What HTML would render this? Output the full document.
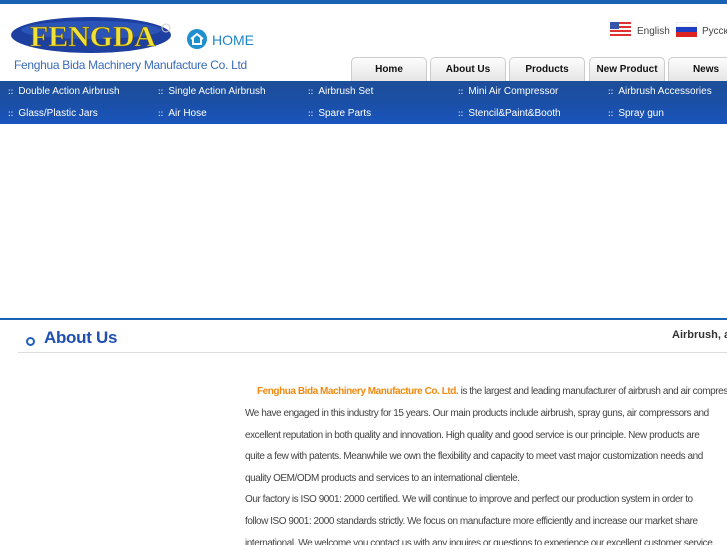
<!DOCTYPE html>
<html><head><meta charset="utf-8"><style>
*{margin:0;padding:0;box-sizing:border-box}
html,body{width:727px;height:545px;overflow:hidden}
body{background:#fff;font-family:"Liberation Sans",sans-serif}
#w{position:relative;width:727px;height:545px;overflow:hidden}
.a{position:absolute;white-space:nowrap}
.topbar{left:0;top:0;width:727px;height:4px;background:#1a62b4}
.tab{position:absolute;top:57px;height:25px;border:1px solid #ccc;border-bottom:none;border-radius:5px 5px 0 0;background:linear-gradient(#fdfdfd,#e4e4e4);font-size:10px;font-weight:bold;text-align:center;line-height:24px;color:#111}
.nav{left:0;top:81px;width:727px;height:43px;background:linear-gradient(#1d4e98,#1a4fa6 50%,#1a55bd)}
.nav div{position:absolute;color:#fff;font-size:10px}
.nav div:before{content:"::";font-size:8px;font-weight:bold;margin-right:5px;color:#dde}
.p{left:245px;font-size:10px;color:#444;letter-spacing:-0.45px}
</style></head><body><div id="w">
<div class="a topbar"></div>
<svg class="a" style="left:10px;top:15px" width="166" height="40"><ellipse cx="81" cy="20" rx="80" ry="18" fill="#1d3fa0"/><ellipse cx="81" cy="15" rx="70" ry="9" fill="#3a6ad0" opacity=".5"/><text x="20" y="31" font-family="Liberation Serif" font-weight="bold" font-size="28" fill="#f1e23a" stroke="#6a5a10" stroke-width=".6" textLength="126" lengthAdjust="spacingAndGlyphs">FENGDA</text><circle cx="156" cy="13" r="4" fill="none" stroke="#ccc"/></svg>
<svg class="a" style="left:186px;top:28px" width="22" height="22"><circle cx="11" cy="11" r="10" fill="#1f8fce"/><path d="M5 11 L11 6 L17 11 M7 10 V16 H15 V10" fill="none" stroke="#fff" stroke-width="2"/></svg>
<div class="a" style="left:212px;top:32px;font-size:14px;color:#1f88c8">HOME</div>
<div class="a" style="left:14px;top:58px;font-size:12px;color:#3a6cb8;letter-spacing:-0.3px">Fenghua Bida Machinery Manufacture Co. Ltd</div>
<svg class="a" style="left:610px;top:22px" width="21" height="15"><rect width="21" height="15" fill="#fff"/><g fill="#d33"><rect y="0" width="21" height="2"/><rect y="4" width="21" height="2"/><rect y="8" width="21" height="2"/><rect y="12" width="21" height="2"/></g><rect width="9" height="7" fill="#3355aa"/></svg>
<div class="a" style="left:637px;top:26px;font-size:10px;color:#444">English</div>
<svg class="a" style="left:676px;top:22px" width="21" height="15"><rect width="21" height="5" fill="#fff" stroke="#ccc" stroke-width=".5"/><rect y="5" width="21" height="5" fill="#1f3fc0"/><rect y="10" width="21" height="5" fill="#d22"/></svg>
<div class="a" style="left:702px;top:26px;font-size:10px;color:#444">Русский</div>
<div class="tab" style="left:351px;width:76px">Home</div>
<div class="tab" style="left:430px;width:76px">About Us</div>
<div class="tab" style="left:509px;width:76px">Products</div>
<div class="tab" style="left:589px;width:76px">New Product</div>
<div class="tab" style="left:668px;width:76px">News</div>
<div class="a nav">
<div style="left:8px;top:5px">Double Action Airbrush</div>
<div style="left:158px;top:5px">Single Action Airbrush</div>
<div style="left:308px;top:5px">Airbrush Set</div>
<div style="left:458px;top:5px">Mini Air Compressor</div>
<div style="left:608px;top:5px">Airbrush Accessories</div>
<div style="left:8px;top:27px">Glass/Plastic Jars</div>
<div style="left:158px;top:27px">Air Hose</div>
<div style="left:308px;top:27px">Spare Parts</div>
<div style="left:458px;top:27px">Stencil&amp;Paint&amp;Booth</div>
<div style="left:608px;top:27px">Spray gun</div>
</div>
<div class="a" style="left:0;top:318px;width:727px;height:2px;background:#1a62b4"></div>
<div class="a" style="left:26px;top:337px;width:9px;height:9px;border:2px solid #1f5fc0;border-radius:50%"></div>
<div class="a" style="left:44px;top:328px;font-size:17px;font-weight:bold;color:#1f4fb0;letter-spacing:-0.3px">About Us</div>
<div class="a" style="left:672px;top:329px;font-size:11px;font-weight:bold;color:#333">Airbrush, air compressor</div>
<div class="a" style="left:18px;top:352px;width:709px;height:1px;background:#ddd"></div>
<div class="a p" style="top:386px;left:257px"><b style="color:#f08a10">Fenghua Bida Machinery Manufacture Co. Ltd.</b> is the largest and leading manufacturer of airbrush and air compressor</div>
<div class="a p" style="top:408px">We have engaged in this industry for 15 years. Our main products include airbrush, spray guns, air compressors and</div>
<div class="a p" style="top:430px">excellent reputation in both quality and innovation. High quality and good service is our principle. New products are</div>
<div class="a p" style="top:451px">quite a few with patents. Meanwhile we own the flexibility and capacity to meet vast major customization needs and</div>
<div class="a p" style="top:473px">quality OEM/ODM products and services to an international clientele.</div>
<div class="a p" style="top:494px">Our factory is ISO 9001: 2000 certified. We will continue to improve and perfect our production system in order to</div>
<div class="a p" style="top:516px">follow ISO 9001: 2000 standards strictly. We focus on manufacture more efficiently and increase our market share</div>
<div class="a p" style="top:538px">international. We welcome you contact us with any inquires or questions to experience our excellent customer service.</div>
</div></body></html>
